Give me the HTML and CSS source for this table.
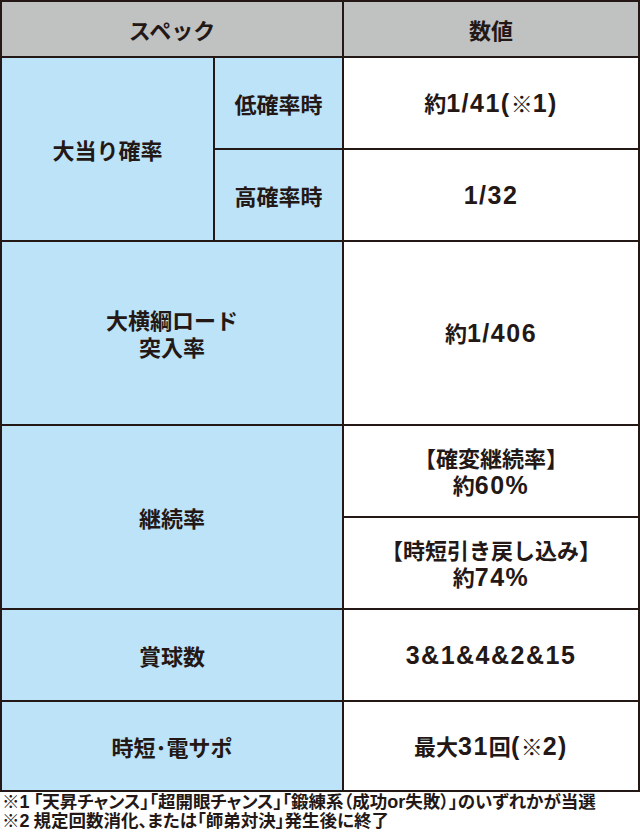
FILE: index.html
```html
<!DOCTYPE html>
<html lang="ja">
<head>
<meta charset="utf-8">
<title>スペック</title>
<link rel="stylesheet" href="styles.css">
</head>
<body>
<div class="spec">
  <div class="cell head span2">スペック</div>
  <div class="cell head">数値</div>

  <div class="cell label tall2">大当り確率</div>
  <div class="cell label">低確率時</div>
  <div class="cell value">約<span class="num">1/41(</span>※<span class="num">1)</span></div>
  <div class="cell label">高確率時</div>
  <div class="cell value"><span class="num">1/32</span></div>

  <div class="cell label span2">大横綱ロード<br>突入率</div>
  <div class="cell value">約<span class="num">1/406</span></div>

  <div class="cell label span2 tall2">継続率</div>
  <div class="cell value">【確変継続率】<br>約<span class="num">60%</span></div>
  <div class="cell value">【時短引き戻し込み】<br>約<span class="num">74%</span></div>

  <div class="cell label span2">賞球数</div>
  <div class="cell value"><span class="num">3&amp;1&amp;4&amp;2&amp;15</span></div>

  <div class="cell label span2">時短･電サポ</div>
  <div class="cell value">最大<span class="num">31</span>回<span class="num">(</span>※<span class="num">2)</span></div>
</div>
<div class="notes">
  <p>※<span class="fn">1</span> 「天昇チャンス」「超開眼チャンス」「鍛練系（成功<span class="fn">or</span>失敗）」のいずれかが当選</p>
  <p>※<span class="fn">2</span> 規定回数消化、または「師弟対決」発生後に終了</p>
</div>
</body>
</html>
```

FILE: styles.css
```css
html, body {
  margin: 0;
  padding: 0;
  background: #ffffff;
}
body {
  width: 640px;
  font-family: "Noto Sans CJK JP", "Noto Sans", sans-serif;
  font-weight: 700;
  color: #231815;
}
.spec {
  display: grid;
  grid-template-columns: 211px 127px 1fr;
  grid-template-rows: 54px 90px 90px 182px 90px 90px 90px 88px;
  gap: 2px;
  padding: 2px;
  background: #231815;
  box-sizing: border-box;
  width: 640px;
}
.cell {
  display: block;
  align-content: center;
  text-align: center;
  font-size: 22px;
  line-height: 27px;
}
.head {
  background: #c0c1c1;
}
.label {
  background: #bde3f8;
}
.value {
  background: #ffffff;
}
.num {
  font-family: "Liberation Sans", "Noto Sans CJK JP", sans-serif;
  font-weight: 700;
  font-size: 25px;
  line-height: 27px;
  letter-spacing: 1.5px;
}
.span2 {
  grid-column: span 2;
}
.tall2 {
  grid-row: span 2;
}
.notes {
  padding: 0 0 0 2px;
}
.notes p {
  margin: 0;
  font-size: 17.5px;
  line-height: 18.5px;
  white-space: nowrap;
  font-feature-settings: "palt" 1;
}
.fn {
  font-family: "Liberation Sans", "Noto Sans CJK JP", sans-serif;
  font-weight: 700;
  font-size: 18px;
  line-height: 1;
}
```
